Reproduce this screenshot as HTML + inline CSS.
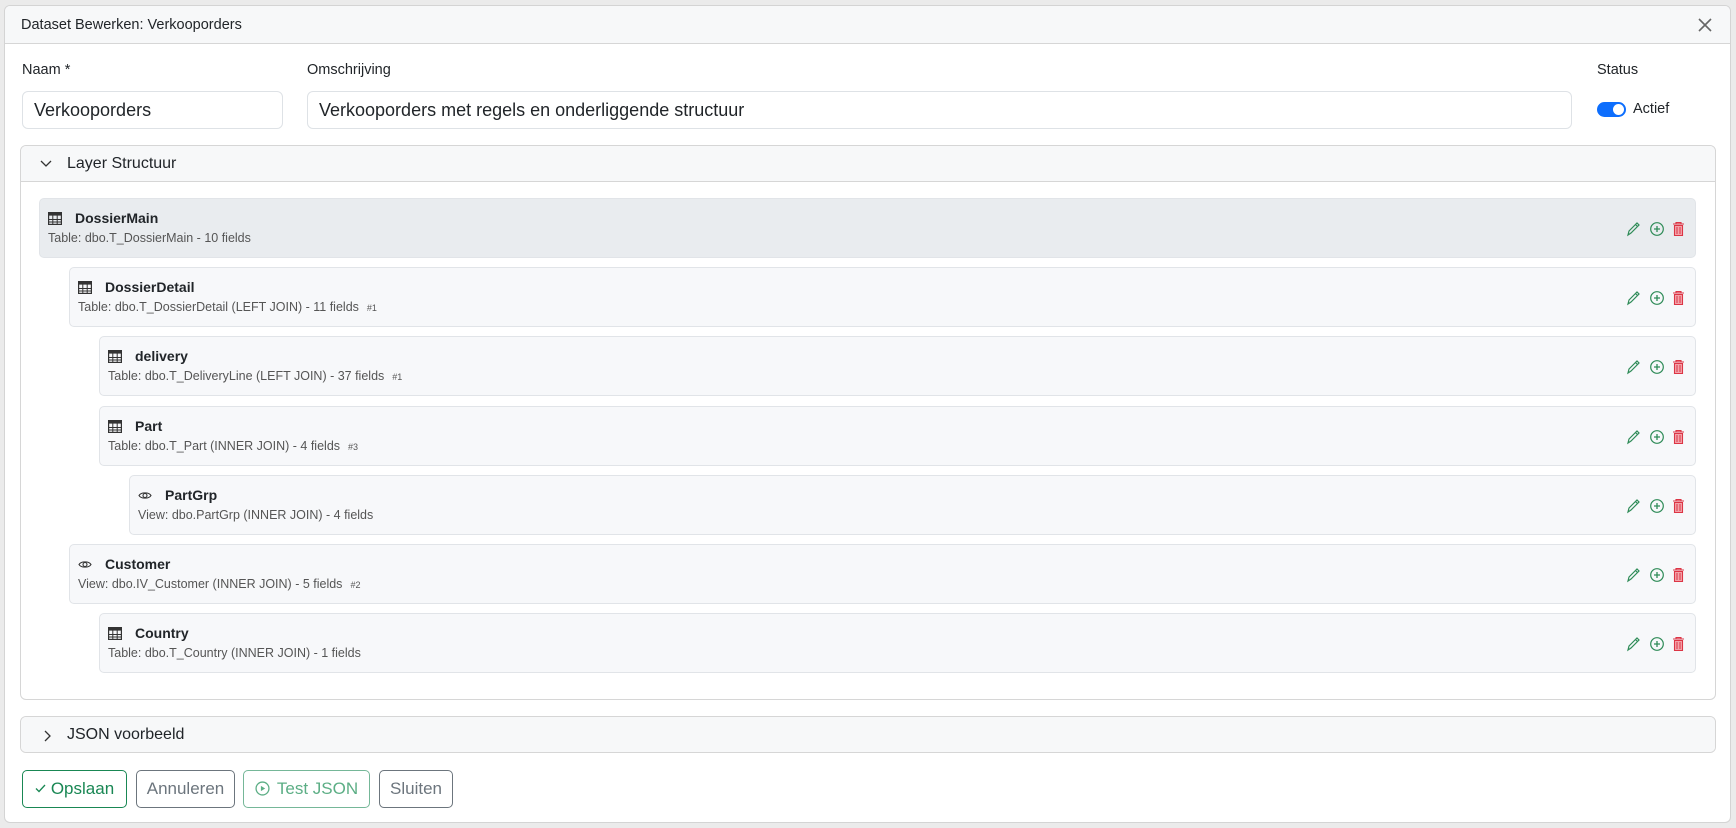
<!DOCTYPE html>
<html><head><meta charset="utf-8"><style>
*{box-sizing:border-box;margin:0;padding:0}
body{width:1736px;height:828px;background:#ebebeb;font-family:"Liberation Sans",Arial,sans-serif;color:#212529;position:relative;overflow:hidden}
.modal{position:absolute;left:4px;top:5px;width:1727px;height:818px;background:#fff;border:1px solid #d4d4d4;border-radius:6px;overflow:hidden}
.hdr{position:absolute;left:0;top:0;right:0;height:38px;background:#f7f8f9;border-bottom:1px solid #d6d6d6}
.hdr span{position:absolute;left:16px;top:11px;font-size:14.5px}
.abs{position:absolute}
.lbl{font-size:14.5px;color:#212529}
.inp{position:absolute;height:38px;border:1px solid #dee2e6;border-radius:6px;font-size:18px;padding:8px 11px;color:#212529}
.panel{position:absolute;left:15px;width:1696px;border:1px solid #d6d6d6;border-radius:6px;overflow:hidden;background:#fff}
.ph{height:36px;background:#f7f8f9;border-bottom:1px solid #d6d6d6;font-size:16px;position:relative}
.ph span{position:absolute;left:46px;top:9px}
.row{position:absolute;height:60px;right:34px;background:#f7f8fa;border:1px solid #e1e4e8;border-radius:5px}
.row.sel{background:#e9ecef}
.row .t{position:absolute;left:35px;top:11px;font-size:14px;font-weight:bold;color:#212529}
.row .s{position:absolute;left:8px;top:32px;font-size:12.5px;color:#555}
.row .s small{font-size:9px;margin-left:8px;color:#555}
.row .ic{position:absolute;left:8px;top:13px}
.acts{position:absolute;right:9px;top:22px;width:60px;height:16px}
.btn{position:absolute;top:764px;height:38px;border:1px solid;border-radius:5px;font-size:17px;padding:8px 0;text-align:center;white-space:nowrap}
</style></head><body>
<div class="modal">
<div class="hdr"><span>Dataset Bewerken: Verkooporders</span>
<svg class="abs" style="left:1692px;top:11px" width="16" height="16" viewBox="0 0 16 16"><path d="M2 2L14 14M14 2L2 14" stroke="#666" stroke-width="1.6"/></svg></div>
<div class="abs lbl" style="left:17px;top:56px">Naam *</div>
<div class="abs lbl" style="left:302px;top:56px">Omschrijving</div>
<div class="abs lbl" style="left:1592px;top:56px">Status</div>
<div class="inp" style="left:17px;top:85px;width:261px">Verkooporders</div>
<div class="inp" style="left:302px;top:85px;width:1265px">Verkooporders met regels en onderliggende structuur</div>
<div class="abs" style="left:1592px;top:96px;width:29px;height:15px;background:#0d6efd;border-radius:8px"><div class="abs" style="left:16px;top:2px;width:11px;height:11px;background:#fff;border-radius:50%"></div></div>
<div class="abs" style="left:1628px;top:95px;font-size:14.5px">Actief</div>

<div class="panel" style="top:139px;height:555px">
<div class="ph"><svg class="abs" style="left:19px;top:14px" width="12" height="8" viewBox="0 0 12 8"><path d="M1 1L6 6L11 1" stroke="#333" stroke-width="1.3" fill="none"/></svg><span>Layer Structuur</span></div>
</div>
<div id="rows"></div>

<div class="panel" style="top:710px;height:37px"><div class="ph" style="border-bottom:2px solid #ccc;height:37px"><svg class="abs" style="left:23px;top:13px" width="8" height="12" viewBox="0 0 8 12"><path d="M1 1L6 6L1 11" stroke="#333" stroke-width="1.3" fill="none"/></svg><span>JSON voorbeeld</span></div></div>

<div class="btn" style="left:17px;width:105px;border-color:#198754;color:#198754"><svg style="vertical-align:1px;margin-right:5px" width="11" height="9" viewBox="0 0 11 9"><path d="M1 4.5L4 7.5L10 1" stroke="#198754" stroke-width="1.3" fill="none"/></svg>Opslaan</div>
<div class="btn" style="left:131px;width:99px;border-color:#6c757d;color:#6c757d">Annuleren</div>
<div class="btn" style="left:238px;width:127px;border-color:#75b798;color:#5cae85"><svg style="vertical-align:-2px;margin-right:7px" width="15" height="15" viewBox="0 0 14 14"><circle cx="7" cy="7" r="6" stroke="#5cae85" fill="none" stroke-width="1.2"/><path d="M5.5 4.5L9.5 7L5.5 9.5Z" fill="#5cae85"/></svg>Test JSON</div>
<div class="btn" style="left:374px;width:74px;border-color:#6c757d;color:#6c757d">Sluiten</div>
</div>
<script>
var T='<svg class="ic" width="14" height="13" viewBox="0 0 14 13"><rect x="0.6" y="0.6" width="12.8" height="11.8" fill="none" stroke="#333" stroke-width="1.2"/><rect x="0.6" y="0.6" width="12.8" height="3" fill="#333"/><path d="M0 7.5H14M0 10H14M4.8 3V13M9.2 3V13" stroke="#333" stroke-width="1"/></svg>';
var V='<svg class="ic" width="14" height="13" viewBox="0 0 14 13"><path d="M1 6.5C3 3 11 3 13 6.5C11 10 3 10 1 6.5Z" fill="none" stroke="#333" stroke-width="1.1"/><circle cx="7" cy="6.5" r="2" fill="none" stroke="#333" stroke-width="1.1"/></svg>';
var A='<svg class="acts" viewBox="0 0 60 16"><path d="M2 14L3 10L11 2L13 4L5 12Z M9.5 3.5L11.5 5.5" fill="none" stroke="#2e8b57" stroke-width="1.2"/><circle cx="31" cy="8" r="6.3" fill="none" stroke="#2e8b57" stroke-width="1.2"/><path d="M31 5V11M28 8H34" stroke="#2e8b57" stroke-width="1.3"/><path d="M47 3H58M50 3V1.5H55V3M48.5 4.5H56.5V14.5H48.5Z" fill="#f3a3aa" stroke="#dc3545" stroke-width="1.1"/><path d="M51 6V13M54 6V13" stroke="#dc3545" stroke-width="1"/></svg>';
var rows=[[38,197,T,'DossierMain','Table: dbo.T_DossierMain - 10 fields','',1],
[68,266,T,'DossierDetail','Table: dbo.T_DossierDetail (LEFT JOIN) - 11 fields','#1'],
[98,335,T,'delivery','Table: dbo.T_DeliveryLine (LEFT JOIN) - 37 fields','#1'],
[98,405,T,'Part','Table: dbo.T_Part (INNER JOIN) - 4 fields','#3'],
[128,474,V,'PartGrp','View: dbo.PartGrp (INNER JOIN) - 4 fields',''],
[68,543,V,'Customer','View: dbo.IV_Customer (INNER JOIN) - 5 fields','#2'],
[98,612,T,'Country','Table: dbo.T_Country (INNER JOIN) - 1 fields','']];
var h='';rows.forEach(function(r){h+='<div class="row'+(r[6]?' sel':'')+'" style="left:'+(r[0]-4)+'px;top:'+(r[1]-5)+'px">'+r[2]+'<div class="t">'+r[3]+'</div><div class="s">'+r[4]+(r[5]?'<small>'+r[5]+'</small>':'')+'</div>'+A+'</div>';});
document.getElementById('rows').outerHTML=h;
</script>
</body></html>
